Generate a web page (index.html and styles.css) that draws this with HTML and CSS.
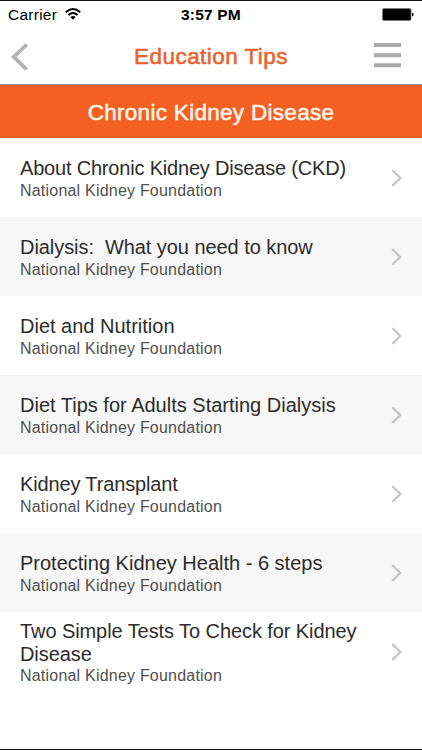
FILE: index.html
```html
<!DOCTYPE html>
<html lang="en">
<head>
<meta charset="utf-8">
<title>Education Tips</title>
<link rel="stylesheet" href="styles.css">
</head>
<body>
<div class="screen">
  <header class="top">
    <div class="status">
      <div class="carrier"><span class="carrier-name">Carrier</span>
        <svg class="wifi" width="16" height="12" viewBox="0 0 16 12" fill="none" stroke="#000" stroke-width="1.9"><path d="M.8 4.2Q8-2.2 15.2 4.2M3.4 7Q8 3 12.6 7"/><path d="M5.3 9Q8 6.8 10.7 9L8 11.7Z" fill="#000" stroke="none"/></svg>
      </div>
      <div class="time">3:57 PM</div>
      <svg class="battery" width="32" height="13" viewBox="0 0 32 13"><rect x=".5" y=".5" width="28.5" height="12" rx="1.5" stroke="#777" stroke-width=".8"/><path d="M30 4.5Q31.6 5 31.6 6.5T30 8.5Z"/></svg>
    </div>
    <nav class="nav">
      <svg class="back" width="17" height="28" viewBox="0 0 17 28" fill="none" stroke="#b3b3b3" stroke-width="3.8"><path d="M15.7 1.5L2.8 14L15.7 26.5"/></svg>
      <h1 class="title"><span>Education Tips</span></h1>
      <svg class="menu" width="27" height="25" viewBox="0 0 27 25" fill="#a9a9a9"><path d="M0 0H27V4H0ZM0 10.2H27V14.2H0ZM0 20.3H27V24.3H0Z"/></svg>
    </nav>
  </header>
  <h2 class="section"><span>Chronic Kidney Disease</span></h2>
  <ul class="list">
    <li class="row"><div class="text"><div class="name n1">About Chronic Kidney Disease (CKD)</div><div class="source">National Kidney Foundation</div></div><svg class="chevron" width="12" height="18" viewBox="0 0 12 18"><path d="M1.2 1.2L9.3 9L1.2 16.8"/></svg></li>
    <li class="row"><div class="text"><div class="name n2">Dialysis:&nbsp; What you need to know</div><div class="source">National Kidney Foundation</div></div><svg class="chevron" width="12" height="18" viewBox="0 0 12 18"><path d="M1.2 1.2L9.3 9L1.2 16.8"/></svg></li>
    <li class="row"><div class="text"><div class="name n3">Diet and Nutrition</div><div class="source">National Kidney Foundation</div></div><svg class="chevron" width="12" height="18" viewBox="0 0 12 18"><path d="M1.2 1.2L9.3 9L1.2 16.8"/></svg></li>
    <li class="row"><div class="text"><div class="name n4">Diet Tips for Adults Starting Dialysis</div><div class="source">National Kidney Foundation</div></div><svg class="chevron" width="12" height="18" viewBox="0 0 12 18"><path d="M1.2 1.2L9.3 9L1.2 16.8"/></svg></li>
    <li class="row"><div class="text"><div class="name n5">Kidney Transplant</div><div class="source">National Kidney Foundation</div></div><svg class="chevron" width="12" height="18" viewBox="0 0 12 18"><path d="M1.2 1.2L9.3 9L1.2 16.8"/></svg></li>
    <li class="row"><div class="text"><div class="name n6">Protecting Kidney Health - 6 steps</div><div class="source">National Kidney Foundation</div></div><svg class="chevron" width="12" height="18" viewBox="0 0 12 18"><path d="M1.2 1.2L9.3 9L1.2 16.8"/></svg></li>
    <li class="row"><div class="text"><div class="name n7">Two Simple Tests To Check for Kidney<br>Disease</div><div class="source">National Kidney Foundation</div></div><svg class="chevron" width="12" height="18" viewBox="0 0 12 18"><path d="M1.2 1.2L9.3 9L1.2 16.8"/></svg></li>
  </ul>
</div>
</body>
</html>
```
FILE: styles.css
```css
* { box-sizing: border-box; }
body { margin: 0; font-family: "Liberation Sans", Arial, sans-serif; background: #fff; }
h1, h2, ul { margin: 0; padding: 0; }
svg { display: block; flex: none; }
.screen { width: 422px; height: 750px; overflow: hidden; border-top: 1px solid #111; border-bottom: 1px solid #111; }
.top { height: 84px; border-bottom: 1px solid #a69a94; }
.status { height: 28px; display: grid; grid-template-columns: 1fr auto 1fr; align-items: center; padding: 0 8px; font-size: 15.5px; color: #000; }
.carrier { display: flex; align-items: center; gap: 8px; letter-spacing: .25px; }
.wifi { margin-top: -2px; }
.time { font-weight: bold; letter-spacing: .2px; }
.battery { justify-self: end; margin: -2px 0 0; }
.nav { height: 55px; display: grid; grid-template-columns: 40px 1fr 40px; align-items: center; padding: 0 21px 0 11px; }
.title { text-align: center; font-size: 22.5px; line-height: 26px; font-weight: normal; letter-spacing: .45px; color: #e9632f; -webkit-text-stroke: .6px #e9632f; padding-left: 10px; }
.menu { justify-self: end; margin-top: -3px; }
.section { height: 53px; line-height: 55px; text-align: center; font-size: 22.5px; font-weight: normal; letter-spacing: .3px; color: #fff4ed; background: #f26122; -webkit-text-stroke: .5px #fff4ed; }
.list { list-style: none; }
.row { height: 79px; display: flex; align-items: center; justify-content: space-between; padding: 3px 19px 0 20px; }
.row:nth-child(even) { background: #f7f7f7; }
.text { white-space: nowrap; }
.name { font-size: 20px; line-height: 23px; color: #2c2c2c; }
.n1 { letter-spacing: -.19px; }
.n2 { letter-spacing: -.06px; }
.n5 { letter-spacing: -.14px; }
.n7 { letter-spacing: -.08px; }
.source { font-size: 16px; line-height: 21px; letter-spacing: .21px; color: #505050; }
.n7 + .source { line-height: 19px; padding-bottom: 2px; }
.chevron { margin-top: -2px; fill: none; stroke: #c5c5ca; stroke-width: 2.3; }
```
